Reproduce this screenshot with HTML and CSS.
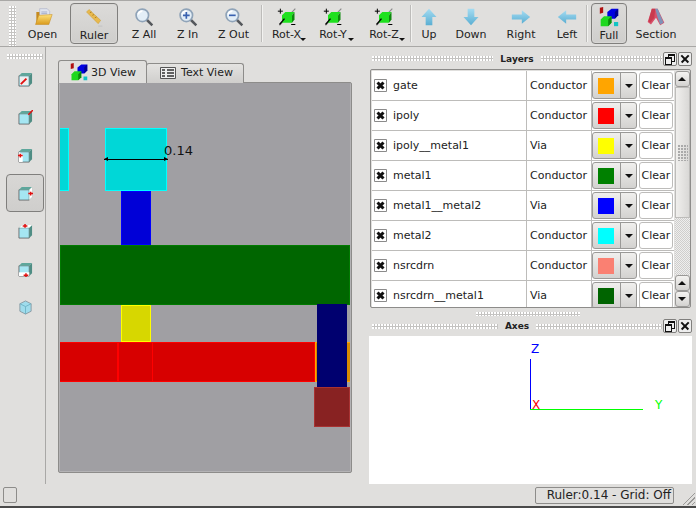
FILE: index.html
```html
<!DOCTYPE html>
<html>
  <head>
    <title>Layout 3D view</title>
    <link rel="stylesheet" href="styles.css">
  </head>
  <body>
    <svg class="defs" width="0" height="0">
      <defs>
        <linearGradient id="fold" x1="0" y1="0" x2="0" y2="1"><stop offset="0" stop-color="#ffe27a"/><stop offset="1" stop-color="#d99a1c"/></linearGradient>
        <linearGradient id="arr" x1="0" y1="0" x2="0" y2="1"><stop offset="0" stop-color="#a5dcf2"/><stop offset="1" stop-color="#5aaed2"/></linearGradient>
        <symbol id="open" viewBox="0 0 24 24">
          <path d="M4 6h6l1 2h6v12H4z" fill="#c58a1e"/>
          <path d="M8 2h9l3 3v9H8z" fill="#dfe3ee" stroke="#a7adc4" stroke-width=".7"/>
          <path d="M10 6h7M10 8h7" stroke="#9aa3c4"/>
          <path d="M7 10l16-1-4 12H3z" fill="url(#fold)" stroke="#c58a1e" stroke-width=".6"/>
        </symbol>
        <symbol id="ruler" viewBox="0 0 24 24">
          <path d="M3 6l3-3 14 13-3 4z" fill="#e8b94e" stroke="#c99a2e" stroke-width=".6"/>
          <path d="M7 7l2-1M10 10l2-1M13 13l2-1" stroke="#a87b1e"/>
          <path d="M17 23h5" stroke="#c9c9c9" stroke-width="2"/>
        </symbol>
        <symbol id="lens" viewBox="0 0 24 24">
          <path d="M15 15l7 7" stroke="#55585c" stroke-width="3"/>
          <circle cx="10" cy="10" r="7.5" fill="#e3eef7" stroke="#8fa3b8" stroke-width="2"/>
          <path d="M5 9a5 5 0 0 1 5-4" stroke="#fff" stroke-width="2" fill="none"/>
        </symbol>
        <symbol id="lensin" viewBox="0 0 24 24">
          <use href="#lens"/>
          <path d="M6 10h8M10 6v8" stroke="#3a62b0" stroke-width="2"/>
        </symbol>
        <symbol id="lensout" viewBox="0 0 24 24">
          <use href="#lens"/>
          <path d="M6 10h8" stroke="#3a62b0" stroke-width="2"/>
        </symbol>
        <symbol id="rot" viewBox="0 0 24 24">
          <path d="M3 22L22 2" stroke="#8a8a8a" stroke-width="1.4"/>
          <path d="M6 10l4-4h11l-3 4v9H6z" fill="#1fe01f"/>
          <path d="M18 10l3-4v9l-3 4z" fill="#0c8a0c"/>
          <path d="M3 21l6-7" stroke="#000" stroke-width="1.6"/>
          <path d="M1 5h6M4 2v6M17 21h5" stroke="#000" stroke-width="1.2"/>
        </symbol>
        <symbol id="arrup" viewBox="0 0 24 24">
          <path d="M12 2l9 10h-5v10H8V12H3z" fill="url(#arr)"/>
        </symbol>
        <symbol id="arrdown" viewBox="0 0 24 24">
          <path d="M12 22l9-10h-5V2H8v10H3z" fill="url(#arr)"/>
        </symbol>
        <symbol id="arrright" viewBox="0 0 24 24">
          <path d="M23 12l-10-8v5H1v6h12v5z" fill="url(#arr)"/>
        </symbol>
        <symbol id="arrleft" viewBox="0 0 24 24">
          <path d="M1 12l10-8v5h12v6H11v5z" fill="url(#arr)"/>
        </symbol>
        <symbol id="full" viewBox="0 0 24 24">
          <path d="M1 1l4-1v7l-4 1z" fill="#b01010"/>
          <path d="M10 6l5-4h8v8l-4 4h-9z" fill="#0000e0"/>
          <path d="M19 6l4-4v8l-4 4z" fill="#000090"/>
          <path d="M2 15l4-4h9v8l-4 4H2z" fill="#1fd81f"/>
          <path d="M11 15l4-4v8l-4 4z" fill="#0c8a0c"/>
          <path d="M18 18h5v5h-5z" fill="#11c4c4"/>
        </symbol>
        <symbol id="section" viewBox="0 0 24 24">
          <path d="M7 2h7l8 17-5 3-5-9-6 8-4-3z" fill="#d8506a"/>
          <path d="M11 2h3l7 17-4 2-3-8z" fill="#7f93b8"/>
          <path d="M7 2h4l-1 11-5 6-2-2z" fill="#c93a4e"/>
        </symbol>
        <symbol id="textview" viewBox="0 0 16 12">
          <path d="M.5.5h15v11H.5z" fill="#eee" stroke="#555"/>
          <path d="M2 3h3M2 6h3M2 9h3M7 3h7M7 6h7M7 9h7" stroke="#333" stroke-width="1.4"/>
        </symbol>
        <symbol id="cube" viewBox="0 0 16 16">
          <path d="M1 4h11v11H1z" fill="#a5e6f2" stroke="#555" stroke-width=".8"/>
          <path d="M1 4l3-3h11l-3 3z" fill="#5ea79c"/>
          <path d="M12 4l3-3v11l-3 3z" fill="#4f8d84"/>
        </symbol>
        <symbol id="check" viewBox="0 0 13 13">
          <path d="M.5.5h12v12H.5z" fill="#fff" stroke="#8b8b8b"/>
          <path d="M3.500 3.500l6 6M9.500 3.500l-6 6" stroke="#111" stroke-width="3"/>
        </symbol>
      </defs>
    </svg>

    <div class="window">
      <div class="toolbar">
        <div class="grip-v"></div>
        <div class="tool t-open"><svg class="ico"><use href="#open"/></svg><span>Open</span></div>
        <div class="tool on t-ruler"><svg class="ico"><use href="#ruler"/></svg><span>Ruler</span></div>
        <div class="tool t-zall"><svg class="ico"><use href="#lens"/></svg><span>Z All</span></div>
        <div class="tool t-zin"><svg class="ico"><use href="#lensin"/></svg><span>Z In</span></div>
        <div class="tool t-zout"><svg class="ico"><use href="#lensout"/></svg><span>Z Out</span></div>
        <div class="sep"></div>
        <div class="tool menu t-rotx"><svg class="ico"><use href="#rot"/></svg><span>Rot-X</span></div>
        <div class="tool menu t-roty"><svg class="ico"><use href="#rot"/></svg><span>Rot-Y</span></div>
        <div class="tool menu t-rotz"><svg class="ico"><use href="#rot"/></svg><span>Rot-Z</span></div>
        <div class="sep"></div>
        <div class="tool t-up"><svg class="ico"><use href="#arrup"/></svg><span>Up</span></div>
        <div class="tool t-down"><svg class="ico"><use href="#arrdown"/></svg><span>Down</span></div>
        <div class="tool t-right"><svg class="ico"><use href="#arrright"/></svg><span>Right</span></div>
        <div class="tool t-left"><svg class="ico"><use href="#arrleft"/></svg><span>Left</span></div>
        <div class="sep"></div>
        <div class="tool on t-full"><svg class="ico"><use href="#full"/></svg><span>Full</span></div>
        <div class="tool t-section"><svg class="ico"><use href="#section"/></svg><span>Section</span></div>
      </div>

      <div class="main">
        <div class="sidebar">
          <div class="grip-h side-grip"></div>
          <div class="side-btn">
            <svg class="side-ico" viewBox="0 0 16 16"><use href="#cube" width="16" height="16"/><path d="M2 5h9v9H2z" fill="#eee"/><path d="M3 13l6-6" stroke="#e01010" stroke-width="2"/></svg>
          </div>
          <div class="side-btn">
            <svg class="side-ico" viewBox="0 0 16 16"><use href="#cube" width="16" height="16"/><path d="M11 5l5-5" stroke="#e01010" stroke-width="1.6"/></svg>
          </div>
          <div class="side-btn">
            <svg class="side-ico" viewBox="0 0 16 16"><use href="#cube" width="16" height="16"/><path d="M1 4l4 3v8H1z" fill="#fff"/><path d="M0 8h5M2.500 6v4" stroke="#e01010" stroke-width="1.6"/></svg>
          </div>
          <div class="side-btn on">
            <svg class="side-ico" viewBox="0 0 16 16"><use href="#cube" width="16" height="16"/><path d="M12 4l3-3v11l-3 3z" fill="#fff"/><path d="M11 8h5M13.500 6v4" stroke="#e01010" stroke-width="1.6"/></svg>
          </div>
          <div class="side-btn">
            <svg class="side-ico" viewBox="0 0 16 16"><use href="#cube" width="16" height="16"/><path d="M1 4l3-3h11l-3 3z" fill="#fff"/><path d="M5 2h5M7.500 0v4" stroke="#e01010" stroke-width="1.6"/></svg>
          </div>
          <div class="side-btn">
            <svg class="side-ico" viewBox="0 0 16 16"><use href="#cube" width="16" height="16"/><path d="M1 11h11v4H1z" fill="#fff"/><path d="M6 14h5M8.500 12v4" stroke="#e01010" stroke-width="1.6"/></svg>
          </div>
          <div class="side-btn">
            <svg class="side-ico" viewBox="0 0 16 16"><path d="M8 1l6 3v8l-6 3-6-3V4z" fill="#9fdcec" stroke="#8a9ba3"/><path d="M2 4l6 3 6-3M8 7v8" stroke="#6fb4c6" fill="none"/></svg>
          </div>
        </div>

        <div class="center">
          <div class="tabs">
            <div class="tab active"><svg class="tab-ico"><use href="#full"/></svg>3D View</div>
            <div class="tab"><svg class="tab-ico2"><use href="#textview"/></svg>Text View</div>
          </div>
          <div class="pane">
            <div class="canvas">
              <div class="shp cyan s1"></div>
              <div class="shp cyan s2"></div>
              <div class="shp blue s3"></div>
              <div class="shp green s4"></div>
              <div class="shp yellow s5"></div>
              <div class="shp red s6"></div>
              <div class="shp red s8"></div>
              <div class="shp red s7"></div>
              <div class="shp orange s9"></div>
              <div class="shp navy s10"></div>
              <div class="shp brown s11"></div>
              <div class="measure">
                <i class="tip-l"></i><i class="tip-r"></i>
              </div>
              <div class="measure-text">0.14</div>
            </div>
          </div>
        </div>

        <div class="docks">
          <div class="dock-title">
            <div class="grip-h fill"></div><b>Layers</b><div class="grip-h fill"></div>
            <div class="dock-btn restore"></div><div class="dock-btn close"></div>
          </div>
          <div class="layers">
            <div class="rows">
              <div class="row"><div class="c-name"><svg class="chk"><use href="#check"/></svg>gate</div><div class="c-type">Conductor</div><div class="c-color"><div class="cbtn"><div class="sw sw-gate"></div><div class="drop"></div></div></div><div class="clear">Clear</div></div>
              <div class="row"><div class="c-name"><svg class="chk"><use href="#check"/></svg>ipoly</div><div class="c-type">Conductor</div><div class="c-color"><div class="cbtn"><div class="sw sw-ipoly"></div><div class="drop"></div></div></div><div class="clear">Clear</div></div>
              <div class="row"><div class="c-name"><svg class="chk"><use href="#check"/></svg>ipoly__metal1</div><div class="c-type">Via</div><div class="c-color"><div class="cbtn"><div class="sw sw-ipm"></div><div class="drop"></div></div></div><div class="clear">Clear</div></div>
              <div class="row"><div class="c-name"><svg class="chk"><use href="#check"/></svg>metal1</div><div class="c-type">Conductor</div><div class="c-color"><div class="cbtn"><div class="sw sw-m1"></div><div class="drop"></div></div></div><div class="clear">Clear</div></div>
              <div class="row"><div class="c-name"><svg class="chk"><use href="#check"/></svg>metal1__metal2</div><div class="c-type">Via</div><div class="c-color"><div class="cbtn"><div class="sw sw-m1m2"></div><div class="drop"></div></div></div><div class="clear">Clear</div></div>
              <div class="row"><div class="c-name"><svg class="chk"><use href="#check"/></svg>metal2</div><div class="c-type">Conductor</div><div class="c-color"><div class="cbtn"><div class="sw sw-m2"></div><div class="drop"></div></div></div><div class="clear">Clear</div></div>
              <div class="row"><div class="c-name"><svg class="chk"><use href="#check"/></svg>nsrcdrn</div><div class="c-type">Conductor</div><div class="c-color"><div class="cbtn"><div class="sw sw-ns"></div><div class="drop"></div></div></div><div class="clear">Clear</div></div>
              <div class="row"><div class="c-name"><svg class="chk"><use href="#check"/></svg>nsrcdrn__metal1</div><div class="c-type">Via</div><div class="c-color"><div class="cbtn"><div class="sw sw-nsm"></div><div class="drop"></div></div></div><div class="clear">Clear</div></div>
            </div>
            <div class="vscroll">
              <div class="sb-btn sb-up"></div>
              <div class="sb-handle"><div class="sb-grip"></div></div>
              <div class="sb-groove"></div>
              <div class="sb-btn sb-up"></div>
              <div class="sb-btn sb-down"></div>
            </div>
          </div>
          <div class="grip-h splitter"></div>
          <div class="dock-title axes-title">
            <div class="grip-h fill"></div><b>Axes</b><div class="grip-h fill"></div>
            <div class="dock-btn restore"></div><div class="dock-btn close"></div>
          </div>
          <div class="axes">
            <svg class="axes-svg" width="323" height="148">
              <path d="M161.500 23v51" stroke="#0000ff" fill="none"/>
              <path d="M161 73.500h113" stroke="#00ff00" fill="none"/>
              <text x="162" y="17" fill="#0000ff" class="ax">Z</text>
              <text x="163" y="73" fill="#ff0000" class="ax">X</text>
              <text x="286" y="73" fill="#00ff00" class="ax">Y</text>
            </svg>
          </div>
        </div>
      </div>

      <div class="status">
        <div class="status-left"></div>
        <div class="status-msg">Ruler:0.14 - Grid: Off</div>
        <div class="size-grip"></div>
      </div>
    </div>
  </body>
</html>
```

FILE: styles.css
```css
html, body {
  margin: 0;
  height: 100%;
}
body {
  width: 696px;
  height: 508px;
  overflow: hidden;
  background: #e0dfdd;
  color: #222;
  font-family: "DejaVu Sans", sans-serif;
  font-size: 11px;
}
.defs {
  position: absolute;
}
.window {
  display: flex;
  flex-direction: column;
  height: 506px;
  border-bottom: 2px solid #4a4a4a;
  box-sizing: content-box;
}

/* top toolbar */
.toolbar {
  display: flex;
  align-items: stretch;
  height: 47px;
  flex-shrink: 0;
  box-sizing: border-box;
  padding: 2px 0 1px 0;
  border-top: 1px solid #a9a8a6;
  border-bottom: 1px solid #a9a8a6;
}
.grip-v {
  width: 7px;
  margin: 3px 2px 0 9px;
  height: 40px;
  flex-shrink: 0;
  background: radial-gradient(circle at 1px 1px, #fff 1px, #c4c3c1 1px) 0 0 / 3px 3px;
}
.tool {
  display: flex;
  flex-direction: column;
  align-items: center;
  justify-content: flex-start;
  box-sizing: border-box;
  padding-top: 3px;
  height: 41px;
  flex-shrink: 0;
  border: 1px solid transparent;
  position: relative;
}
.tool span {
  margin-top: 1px;
  line-height: 13px;
  white-space: nowrap;
}
.tool.on span {
  margin-top: 2px;
}
.tool.on {
  border: 1px solid #807f7d;
  border-radius: 4px;
  background: linear-gradient(#dcdbd9, #cfcecc);
  box-shadow: inset 0 0 0 1px #d8d7d5;
}
.tool.menu::after {
  content: "";
  position: absolute;
  right: 2px;
  bottom: 2px;
  border: 3px solid transparent;
  border-top: 3px solid #111;
  border-bottom: 0;
}
.ico {
  width: 20px;
  height: 20px;
  flex-shrink: 0;
}
.t-open { width: 45px; margin-left: 2px; }
.t-ruler { width: 48px; margin: 0 3px 0 5px; }
.t-zall { width: 46px; }
.t-zin { width: 41px; }
.t-zout { width: 51px; }
.sep {
  width: 1px;
  margin: 2px 1px 3px 2px;
  background: #bdbcba;
  border-right: 1px solid #f2f2f0;
  flex-shrink: 0;
}
.t-rotx { width: 45px; }
.t-roty { width: 48px; }
.t-rotz { width: 48px; margin-left: 3px; }
.t-up { width: 30px; margin-left: 1px; }
.t-down { width: 54px; }
.t-right { width: 46px; }
.t-left { width: 34px; margin-left: 6px; }
.t-full { width: 36px; margin-left: 2px; }
.t-section { width: 58px; }

/* left toolbar */
.main {
  display: flex;
  flex: 1;
  min-height: 0;
}
.sidebar {
  width: 46px;
  flex-shrink: 0;
  box-sizing: border-box;
  border-right: 1px solid #a9a8a6;
  display: flex;
  flex-direction: column;
  align-items: center;
  padding: 7px 0 0 5px;
}
.side-grip {
  width: 36px;
  height: 5px;
  margin-bottom: 1px;
}
.side-btn {
  display: flex;
  align-items: center;
  justify-content: center;
  width: 38px;
  height: 38px;
  box-sizing: border-box;
  border: 1px solid transparent;
}
.side-btn.on {
  border: 1px solid #807f7d;
  border-radius: 4px;
  background: linear-gradient(#d8d7d5, #cfcecc);
}
.side-ico {
  width: 15px;
  height: 15px;
}

/* tabs */
.center {
  width: 322px;
  flex-shrink: 0;
  box-sizing: border-box;
  padding: 12px 16px 0 12px;
  display: flex;
  flex-direction: column;
}
.tabs {
  display: flex;
  height: 24px;
  align-items: flex-end;
  margin-bottom: -1px;
  position: relative;
  z-index: 1;
}
.tab {
  display: flex;
  align-items: center;
  height: 20px;
  box-sizing: border-box;
  border: 1px solid #8d8c8a;
  border-bottom: 0;
  border-radius: 3px 3px 0 0;
  padding: 0 10px 2px 13px;
  margin-left: -1px;
  background: linear-gradient(#e4e3e1, #cfcecc);
  white-space: nowrap;
}
.tab.active {
  height: 23px;
  margin-left: 0;
  padding: 0 10px 0 12px;
  background: #e0dfdd;
}
.tab-ico {
  width: 18px;
  height: 18px;
  margin-right: 3px;
  margin-left: -1px;
}
.tab-ico2 {
  width: 16px;
  height: 12px;
  margin-right: 5px;
}
.pane {
  border: 1px solid #8d8c8a;
  border-radius: 2px;
  height: 391px;
  box-sizing: border-box;
  padding: 0 1px 1px 1px;
  background: #b4b3b5;
}
.canvas {
  position: relative;
  height: 388px;
  width: 290px;
  background: #a09fa3;
  overflow: hidden;
}
.shp {
  position: absolute;
  box-sizing: border-box;
  border: 1px solid;
}
.cyan { background: #00d7d7; border-color: #00ffff; }
.blue { background: #0000d7; border-color: #0000ff; }
.green { background: #006600; border-color: #007a00; }
.yellow { background: #d7d700; border-color: #ffff00; }
.red { background: #d70000; border-color: #ff0000; }
.orange { background: #d78a00; border-color: #ffa500; }
.navy { background: #00006f; border-color: #00006f; }
.brown { background: #882222; border-color: #a83232; }
/* canvas geometry, origin is 60,83 in the window */
.s1 { left: -2px; top: 45px; width: 11px; height: 63px; }
.s2 { left: 45px; top: 45px; width: 62px; height: 63px; }
.s3 { left: 61px; top: 108px; width: 30px; height: 54px; }
.s4 { left: 0; top: 162px; width: 290px; height: 60px; }
.s5 { left: 61px; top: 222px; width: 30px; height: 37px; }
.s6 { left: -2px; top: 259px; width: 60px; height: 40px; }
.s7 { left: 58px; top: 259px; width: 35px; height: 40px; }
.s8 { left: 92px; top: 259px; width: 163px; height: 40px; }
.s9 { left: 255px; top: 259px; width: 36px; height: 40px; }
.s10 { left: 257px; top: 221px; width: 30px; height: 83px; }
.s11 { left: 254px; top: 304px; width: 36px; height: 40px; }
.measure {
  position: absolute;
  left: 44px;
  top: 76px;
  width: 64px;
  height: 1px;
  background: #000;
}
.measure i {
  position: absolute;
  top: -2px;
  border: 2.5px solid transparent;
}
.tip-l { left: 0; border-left: 0 !important; border-right: 4px solid #000 !important; }
.tip-r { right: 0; border-right: 0 !important; border-left: 4px solid #000 !important; }
.measure-text {
  position: absolute;
  left: 104px;
  top: 60px;
  font-size: 13px;
  line-height: 16px;
  color: #111;
}

/* docks */
.docks {
  width: 328px;
  flex-shrink: 0;
  display: flex;
  flex-direction: column;
}
.grip-h {
  background: radial-gradient(circle at 1px 1px, #fff 1px, #c4c3c1 1px) 0 0 / 3px 3px;
  height: 5px;
}
.grip-h.fill {
  flex: 1;
}
.dock-title {
  display: flex;
  align-items: center;
  height: 17px;
  margin-top: 3px;
  padding-left: 4px;
  padding-right: 4px;
  flex-shrink: 0;
}
.dock-title b {
  font-size: 9px;
  margin: 0 7px;
}
.dock-btn {
  width: 14px;
  height: 14px;
  box-sizing: border-box;
  border: 1px solid #807f7d;
  border-radius: 2px;
  margin-left: 1px;
  background: #eee;
  position: relative;
}
.dock-btn.restore::before {
  content: "";
  position: absolute;
  left: 4px;
  top: 1px;
  width: 5px;
  height: 5px;
  border: 1px solid #111;
  border-top-width: 2px;
}
.dock-btn.restore::after {
  content: "";
  position: absolute;
  left: 1px;
  top: 4px;
  width: 5px;
  height: 5px;
  border: 1px solid #111;
  border-top-width: 2px;
  background: #eee;
}
.dock-btn.close::before,
.dock-btn.close::after {
  content: "";
  position: absolute;
  left: 1px;
  top: 5px;
  width: 10px;
  height: 1.500px;
  background: #111;
  transform: rotate(45deg);
}
.dock-btn.close::after {
  transform: rotate(-45deg);
}
.layers {
  display: flex;
  height: 239px;
  margin: 2px 5px 0 2px;
  padding: 1px 0 0 1px;
  box-sizing: border-box;
  border: 1px solid #8d8c8a;
  border-radius: 2px;
  background: #e0dfdd;
  flex-shrink: 0;
  overflow: hidden;
}
.rows {
  width: 302px;
  background: #fff;
  flex-shrink: 0;
}
.row {
  display: flex;
  height: 30px;
  box-sizing: border-box;
  border-bottom: 1px solid #bdbcba;
  align-items: stretch;
}
.c-name {
  width: 155px;
  flex-shrink: 0;
  box-sizing: border-box;
  display: flex;
  align-items: center;
  padding-left: 2px;
  border-right: 1px solid #bdbcba;
}
.chk {
  width: 13px;
  height: 13px;
  margin-right: 6px;
}
.c-type {
  width: 65px;
  flex-shrink: 0;
  box-sizing: border-box;
  display: flex;
  align-items: center;
  padding-left: 3px;
  border-right: 1px solid #bdbcba;
}
.c-color {
  width: 47px;
  flex-shrink: 0;
  padding-top: 1px;
}
.cbtn {
  display: flex;
  align-items: center;
  width: 45px;
  height: 27px;
  box-sizing: border-box;
  border: 1px solid #9a9997;
  border-radius: 3px;
  background: linear-gradient(#f0efed, #d3d2d0);
  padding-left: 5px;
}
.sw {
  width: 16px;
  height: 16px;
}
.sw-gate { background: #ffa500; }
.sw-ipoly { background: #ff0000; }
.sw-ipm { background: #ffff00; }
.sw-m1 { background: #008000; }
.sw-m1m2 { background: #0000ff; }
.sw-m2 { background: #00ffff; }
.sw-ns { background: #fa8072; }
.sw-nsm { background: #006400; }
.drop {
  margin-left: 6px;
  width: 16px;
  height: 25px;
  border-left: 1px solid #9a9997;
  position: relative;
}
.drop::after {
  content: "";
  position: absolute;
  left: 4px;
  top: 11px;
  border: 4px solid transparent;
  border-top: 4px solid #111;
  border-bottom: 0;
}
.clear {
  width: 34px;
  height: 27px;
  margin-top: 1px;
  flex-shrink: 0;
  box-sizing: border-box;
  border: 1px solid #bdbcba;
  border-radius: 3px;
  text-align: center;
  line-height: 25px;
  background: #fff;
}
.vscroll {
  width: 15px;
  margin-left: 1px;
  display: flex;
  flex-direction: column;
  flex-shrink: 0;
}
.sb-btn {
  height: 16px;
  box-sizing: border-box;
  border: 1px solid #9a9997;
  border-radius: 3px;
  background: linear-gradient(#f4f3f1, #d3d2d0);
  position: relative;
  flex-shrink: 0;
}
.sb-up::after,
.sb-down::after {
  content: "";
  position: absolute;
  left: 2px;
  top: 5px;
  border: 4px solid transparent;
}
.sb-up::after {
  border-bottom: 4px solid #111;
  border-top: 0;
}
.sb-down::after {
  border-top: 4px solid #111;
  border-bottom: 0;
}
.sb-handle {
  height: 131px;
  box-sizing: border-box;
  border: 1px solid #bdbcba;
  background: linear-gradient(90deg, #f0efed, #d9d8d6);
  display: flex;
  align-items: center;
  justify-content: center;
  flex-shrink: 0;
}
.sb-grip {
  width: 10px;
  height: 16px;
  background: radial-gradient(circle at 1px 1px, #aaa 1px, transparent 1px) 0 0 / 3px 3px;
}
.sb-groove {
  flex: 1;
  background: repeating-conic-gradient(#cfcecc 0 25%, #eee 0 50%) 0 0 / 2px 2px;
}
.splitter {
  width: 104px;
  height: 4px;
  margin: 4px 0 0 108px;
  flex-shrink: 0;
}
.axes-title {
  margin-top: 2px;
  height: 16px;
}
.axes {
  flex: 1;
  background: #fff;
  margin-top: 2px;
  margin-right: 4px;
  margin-left: 1px;
  min-height: 0;
}
.axes-svg {
  display: block;
}
.ax {
  font-family: "DejaVu Sans", sans-serif;
  font-size: 12px;
}

/* status bar */
.status {
  display: flex;
  align-items: center;
  height: 22px;
  flex-shrink: 0;
  padding-left: 3px;
  position: relative;
}
.status-left {
  width: 14px;
  height: 16px;
  box-sizing: border-box;
  border: 1px solid #8d8c8a;
  border-radius: 2px;
}
.status-msg {
  margin-left: auto;
  margin-right: 22px;
  width: 139px;
  height: 17px;
  box-sizing: border-box;
  border: 1px solid #8d8c8a;
  border-radius: 2px;
  line-height: 15px;
  text-align: right;
  padding-right: 2px;
  font-size: 12px;
  white-space: nowrap;
}
.size-grip {
  position: absolute;
  right: 1px;
  bottom: 1px;
  width: 14px;
  height: 14px;
  background: repeating-linear-gradient(135deg, transparent 0 2px, #9a9997 2px 3px);
  clip-path: polygon(100% 0, 100% 100%, 0 100%);
}
```
